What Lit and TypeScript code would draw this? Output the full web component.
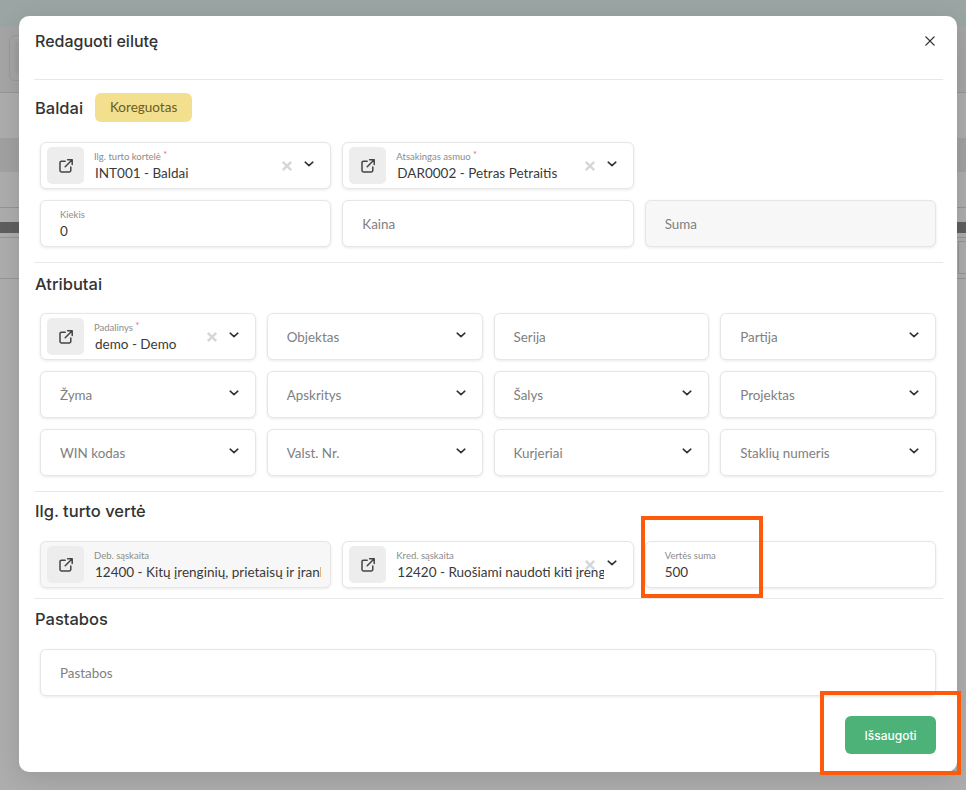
import { LitElement, css, html, nothing } from "lit";
import { customElement, property } from "lit/decorators.js";

const openIcon = html`<svg width="16" height="16" viewBox="0 0 16 16" fill="none" stroke="#444" stroke-width="1.5" stroke-linecap="round" stroke-linejoin="round">
  <path d="M7.2 3.2H3.4a1.4 1.4 0 0 0-1.4 1.4v8a1.4 1.4 0 0 0 1.4 1.4h8a1.4 1.4 0 0 0 1.4-1.4V9" />
  <path d="M9.6 1.8h4.6v4.6M14.2 1.8 7.2 8.8" />
</svg>`;

const chevron = html`<svg width="12" height="12" viewBox="0 0 12 12" fill="none" stroke="#333" stroke-width="1.6" stroke-linecap="round" stroke-linejoin="round">
  <path d="M2.2 4.2 6 7.6l3.8-3.4" />
</svg>`;

const clearIcon = html`<svg width="12" height="12" viewBox="0 0 12 12" fill="none" stroke="#d3d7db" stroke-width="2.4">
  <path d="M1.8 1.8l8.4 8.4M10.2 1.8l-8.4 8.4" />
</svg>`;

@customElement("form-field")
export class FormField extends LitElement {
  @property() label = "";
  @property() value = "";
  @property({ type: Boolean }) link = false;
  @property({ type: Boolean }) select = false;
  @property({ type: Boolean }) clear = false;
  @property({ type: Boolean }) required = false;
  @property({ type: Boolean }) disabled = false;

  static styles = css`
    :host {
      display: block;
      min-width: 0;
    }
    .field {
      position: relative;
      display: flex;
      align-items: center;
      box-sizing: border-box;
      height: 47px;
      padding: 0 6px;
      background: #fff;
      border: 1px solid #e6e6e6;
      border-radius: 6px;
      box-shadow: 0 1px 3px rgba(0, 0, 0, 0.09);
    }
    .field.off {
      background: #f7f7f7;
    }
    .open {
      flex: none;
      display: flex;
      align-items: center;
      justify-content: center;
      width: 37px;
      height: 37px;
      margin-right: 10px;
      background: #ededed;
      border-radius: 5px;
    }
    .text {
      flex: 1;
      min-width: 0;
      padding-left: 13px;
      overflow: hidden;
      white-space: nowrap;
    }
    .link .text {
      padding-left: 0;
      margin-right: 3px;
    }
    .link.sel .text {
      margin-right: 23px;
    }
    .label {
      height: 13px;
      margin-bottom: 1px;
      font-size: 9.5px;
      line-height: 13px;
      color: #8c8c8c;
    }
    .star {
      position: relative;
      top: -2px;
      color: #ec5f86;
      font-size: 9px;
    }
    .value {
      height: 18px;
      font-size: 13.5px;
      line-height: 18px;
      color: #3a3a3a;
    }
    .link .value {
      padding-left: 1px;
    }
    .hint {
      position: relative;
      top: -1px;
      font-size: 13.4px;
      color: #808080;
    }
    .clear,
    .chev {
      position: absolute;
      top: 50%;
      display: flex;
    }
    .chev {
      right: 15px;
      margin-top: -7.5px;
    }
    .clear {
      right: 37px;
      margin-top: -6px;
    }
  `;

  protected override render() {
    const filled = this.value !== "";
    return html`
      <div class="field ${this.link ? "link" : ""} ${this.select ? "sel" : ""} ${this.disabled ? "off" : ""}">
        ${this.link ? html`<span class="open">${openIcon}</span>` : nothing}
        <div class="text">
          ${filled
            ? html`<div class="label">${this.label}${this.required ? html` <span class="star">*</span>` : nothing}</div>
                <div class="value">${this.value}</div>`
            : html`<span class="hint">${this.label}</span>`}
        </div>
        ${this.clear ? html`<span class="clear">${clearIcon}</span>` : nothing}
        ${this.select ? html`<span class="chev">${chevron}</span>` : nothing}
      </div>
    `;
  }
}

@customElement("app-root")
export class AppRoot extends LitElement {
  static styles = css`
    :host {
      display: block;
      position: relative;
      width: 966px;
      height: 790px;
      overflow: hidden;
      font-family: "Lato", "Noto Sans", sans-serif;
      background: #fff;
    }

    /* page behind the dialog */
    .topbar {
      height: 27px;
      background: #e5f4f1;
    }
    .toolbar {
      box-sizing: border-box;
      height: 66px;
      padding: 8px 0 0 9px;
      background: #f4f4f4;
      border-bottom: 1px solid #dcdcdc;
    }
    .tool {
      box-sizing: border-box;
      width: 60px;
      height: 46px;
      padding: 5px;
      border: 1px solid #e2e2e2;
      border-radius: 6px;
    }
    .tool span {
      display: block;
      height: 34px;
      background: #ececec;
      border-radius: 5px;
    }
    .thead {
      height: 45px;
    }
    .band {
      height: 34px;
      background: #ededed;
    }
    .row {
      height: 35px;
      border-bottom: 1px solid #dcdcdc;
    }
    .gap {
      height: 14px;
    }
    .dark {
      height: 11px;
      background: #8d8d8d;
    }
    .sub {
      height: 4px;
      border-bottom: 1px solid #dcdcdc;
    }
    .boxrow {
      box-sizing: border-box;
      height: 41px;
      padding: 3px 0 0 958px;
      border-bottom: 1px solid #dcdcdc;
    }
    .boxrow span {
      display: block;
      box-sizing: border-box;
      width: 60px;
      height: 33px;
      border: 1px solid #dcdcdc;
    }

    .overlay {
      position: absolute;
      inset: 0;
      background: rgba(0, 0, 0, 0.32);
      padding: 16px 9px 18px 19px;
      box-sizing: border-box;
    }
    .modal {
      box-sizing: border-box;
      height: 756px;
      padding: 0 14px 0 15px;
      background: #fff;
      border-radius: 10px;
      box-shadow: 0 6px 24px rgba(0, 0, 0, 0.12);
    }
    .head {
      display: flex;
      justify-content: space-between;
      box-sizing: border-box;
      height: 64px;
      padding: 14px 8px 0 1px;
      border-bottom: 1px solid #e8e8e8;
    }
    .head h2 {
      margin: 0;
      font-family: "Inter", "Lato", sans-serif;
      font-size: 16px;
      line-height: 22px;
      font-weight: 500;
      color: #333;
    }
    .close {
      display: flex;
      margin-top: 6px;
      height: 10px;
    }
    section {
      padding: 0 7px 15px 6px;
      border-bottom: 1px solid #e8e8e8;
    }
    section.s1 {
      padding-top: 13px;
    }
    section.s2 {
      padding-top: 10px;
    }
    section.s3 {
      padding-top: 8px;
      padding-bottom: 10px;
    }
    section.s4 {
      padding-top: 9px;
      border-bottom: 0;
    }
    .title {
      display: flex;
      align-items: center;
      gap: 12px;
      height: 22px;
      margin: 0 0 19px -5px;
      font-family: "Inter", "Lato", sans-serif;
      font-size: 16.5px;
      font-weight: 500;
      color: #333;
    }
    .s1 .title {
      height: 29px;
      margin-bottom: 20px;
    }
    .s2 .title {
      margin-bottom: 18px;
    }
    .badge {
      box-sizing: border-box;
      width: 97px;
      height: 29px;
      font-family: "Lato", "Noto Sans", sans-serif;
      font-size: 13.5px;
      font-weight: 400;
      line-height: 29px;
      text-align: center;
      color: #6b5d1a;
      background: #f3e08f;
      border-radius: 6px;
    }
    .grid3,
    .grid4 {
      display: grid;
      gap: 11px;
    }
    .grid3 {
      grid-template-columns: repeat(3, minmax(0, 1fr));
    }
    .grid4 {
      grid-template-columns: repeat(4, minmax(0, 1fr));
    }
    .foot {
      display: flex;
      justify-content: flex-end;
      padding: 5px 7px 0 0;
    }
    button {
      width: 91px;
      height: 38px;
      padding: 0;
      border: 0;
      border-radius: 6px;
      font: 500 12px "Inter", "Lato", sans-serif;
      color: #fff;
      background: #4db277;
    }

    /* annotation boxes drawn over the screenshot */
    .mark {
      position: absolute;
      box-sizing: border-box;
      border: 4px solid #ff5a0a;
    }
    .mark.sum {
      left: 641px;
      top: 516px;
      width: 122px;
      height: 82px;
    }
    .mark.save {
      left: 820px;
      top: 691px;
      width: 141px;
      height: 84px;
    }
  `;

  protected override render() {
    return html`
      <div class="topbar"></div>
      <div class="toolbar"><div class="tool"><span></span></div></div>
      <div class="thead"></div>
      <div class="band"></div>
      <div class="row"></div>
      <div class="gap"></div>
      <div class="dark"></div>
      <div class="sub"></div>
      <div class="boxrow"><span></span></div>

      <div class="overlay">
        <div class="modal">
          <div class="head">
            <h2>Redaguoti eilutę</h2>
            <span class="close">
              <svg width="10" height="10" viewBox="0 0 10 10" fill="none" stroke="#333" stroke-width="1.1">
                <path d="M.5.5l9 9M9.5.5l-9 9" />
              </svg>
            </span>
          </div>

          <section class="s1">
            <div class="title">Baldai <span class="badge">Koreguotas</span></div>
            <div class="grid3">
              <form-field link select clear required label="Ilg. turto kortelė" value="INT001 - Baldai"></form-field>
              <form-field link select clear required label="Atsakingas asmuo" value="DAR0002 - Petras Petraitis"></form-field>
              <span></span>
              <form-field label="Kiekis" value="0"></form-field>
              <form-field label="Kaina"></form-field>
              <form-field disabled label="Suma"></form-field>
            </div>
          </section>

          <section class="s2">
            <div class="title">Atributai</div>
            <div class="grid4">
              <form-field link select clear required label="Padalinys" value="demo - Demo"></form-field>
              <form-field select label="Objektas"></form-field>
              <form-field label="Serija"></form-field>
              <form-field select label="Partija"></form-field>
              <form-field select label="Žyma"></form-field>
              <form-field select label="Apskritys"></form-field>
              <form-field select label="Šalys"></form-field>
              <form-field select label="Projektas"></form-field>
              <form-field select label="WIN kodas"></form-field>
              <form-field select label="Valst. Nr."></form-field>
              <form-field select label="Kurjeriai"></form-field>
              <form-field select label="Staklių numeris"></form-field>
            </div>
          </section>

          <section class="s3">
            <div class="title">Ilg. turto vertė</div>
            <div class="grid3">
              <form-field link disabled label="Deb. sąskaita" value="12400 - Kitų įrenginių, prietaisų ir įrankių"></form-field>
              <form-field link select clear label="Kred. sąskaita" value="12420 - Ruošiami naudoti kiti įrenginiai"></form-field>
              <form-field label="Vertės suma" value="500"></form-field>
            </div>
          </section>

          <section class="s4">
            <div class="title">Pastabos</div>
            <form-field label="Pastabos"></form-field>
          </section>

          <div class="foot"><button>Išsaugoti</button></div>
        </div>
      </div>

      <div class="mark sum"></div>
      <div class="mark save"></div>
    `;
  }
}
